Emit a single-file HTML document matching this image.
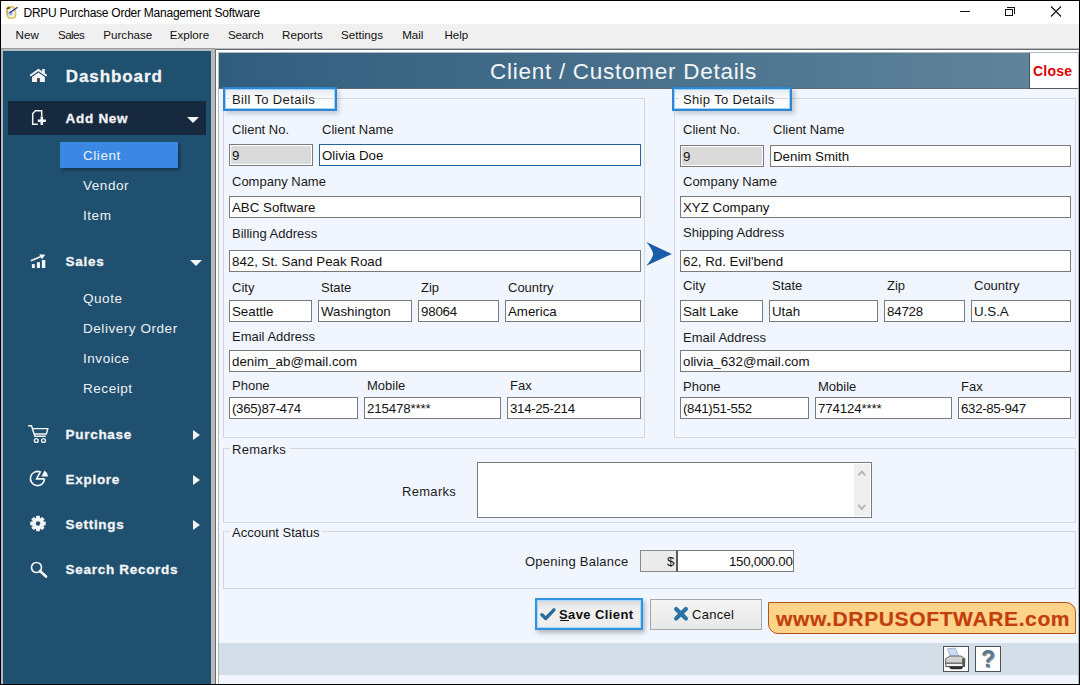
<!DOCTYPE html>
<html><head><meta charset="utf-8">
<style>
*{margin:0;padding:0;box-sizing:border-box}
html,body{width:1080px;height:685px;overflow:hidden}
body{background:#000;position:relative;font-family:"Liberation Sans",sans-serif;color:#000}
.a{position:absolute}
.t{position:absolute;white-space:nowrap;line-height:1}
#title{left:1px;top:1px;width:1078px;height:23px;background:#fff}
#menu{left:1px;top:24px;width:1078px;height:24px;background:#f0f0f0}
.mi{font-size:11.6px;color:#111;top:29px}
#side{left:3px;top:51px;width:208px;height:633px;background:#1f506f}
.sb{font-weight:bold;font-size:13.5px;letter-spacing:0.7px;color:#f2f4f6;-webkit-text-stroke:0.3px #f2f4f6}
.ss{font-size:13.5px;letter-spacing:0.55px;color:#eef1f4}
#main{left:219px;top:53px;width:859px;height:631px;background:#f1f6fe}
.lbl{font-size:13px;color:#1a1a1a}
.in{position:absolute;background:#fff;border:1px solid #7a7a7a;height:22px}
.iv{font-size:13.3px;color:#111;margin-top:-0.4px}
.grp{position:absolute;border:1px solid #d3d8de}
</style></head><body>
<!-- title bar -->
<div id="title" class="a"></div>
<svg class="a" style="left:3px;top:3px" width="17" height="17" viewBox="0 0 17 17">
 <path d="M3.8 5.2 L5.4 3.6 L7 4.6 L9 3.5 L10.8 4.3 L11.4 6.2 L12.6 9.2 L12.4 13.6 L10.8 15 L6.2 15.2 L4.6 13.4 L3.8 9.4 Z" fill="#fbf6e4" stroke="#dcc36a" stroke-width="1.7"/>
 <path d="M4.2 7 L4.8 11.5" stroke="#c9a55a" stroke-width="1.2"/>
 <path d="M4 5.6 L7.2 4.6" stroke="#2a2a2a" stroke-width="1.3"/>
 <circle cx="7.6" cy="10.4" r="2.2" fill="#a8baf0"/>
 <path d="M6.4 10 L14.6 4.3" stroke="#2836a0" stroke-width="1.4"/>
</svg>
<div class="t" style="left:23.5px;top:6.5px;font-size:12px;letter-spacing:-0.25px;color:#000">DRPU Purchase Order Management Software</div>
<!-- window controls -->
<div class="a" style="left:960px;top:11px;width:10px;height:1px;background:#111"></div>
<div class="a" style="left:1005px;top:9px;width:8px;height:7px;border:1px solid #111"></div>
<div class="a" style="left:1007px;top:7px;width:8px;height:7px;border-top:1px solid #111;border-right:1px solid #111"></div>
<svg class="a" style="left:1050px;top:6px" width="12" height="11" viewBox="0 0 12 11"><path d="M1 0.5 L11 10.5 M11 0.5 L1 10.5" stroke="#111" stroke-width="1.1"/></svg>
<!-- menu -->
<div id="menu" class="a"></div>
<div class="t mi" style="left:15.6px">New</div>
<div class="t mi" style="left:58px;letter-spacing:-0.55px">Sales</div>
<div class="t mi" style="left:103.3px">Purchase</div>
<div class="t mi" style="left:169.8px">Explore</div>
<div class="t mi" style="left:228px;letter-spacing:-0.2px">Search</div>
<div class="t mi" style="left:282.1px">Reports</div>
<div class="t mi" style="left:341.1px">Settings</div>
<div class="t mi" style="left:402.2px">Mail</div>
<div class="t mi" style="left:444.4px">Help</div>
<!-- frame strips -->
<div class="a" style="left:1px;top:48px;width:1078px;height:636px;background:#b4bcc2"></div>
<div class="a" style="left:211px;top:48px;width:4px;height:636px;background:#b8bbbd"></div>
<div class="a" style="left:1px;top:48px;width:214px;height:1px;background:#9a9a9a"></div>
<!-- sidebar -->
<div id="side" class="a"></div>

<!-- sidebar content -->
<svg class="a" style="left:28px;top:66px" width="22" height="18" viewBox="0 0 22 18">
 <path d="M1.6 10.2 L10.4 3.8 L19.2 10.2" fill="none" stroke="#1f506f" stroke-width="3.4"/>
 <rect x="14.2" y="3" width="2.6" height="5" fill="#f2f4f6"/>
 <path d="M2.1 9.8 L10.4 4 L18.7 9.8" fill="none" stroke="#f2f4f6" stroke-width="1.9"/>
 <path d="M4 11 L10.4 6.5 L16.9 11 L16.9 16 L4 16 Z" fill="#f2f4f6"/>
 <rect x="9.1" y="12.1" width="2.7" height="3.9" fill="#2e3c48"/>
</svg>
<div class="t sb" style="left:65.8px;top:68px;font-size:17px;letter-spacing:0.9px">Dashboard</div>
<div class="a" style="left:8px;top:101px;width:198px;height:34px;background:#17293f"></div>
<svg class="a" style="left:30px;top:108px" width="18" height="18" viewBox="0 0 18 18">
 <path d="M8 16.3 L2.7 16.3 L2.7 5.5 L5.5 2.7 L11.7 2.7 L11.7 8.5" fill="none" stroke="#f2f4f6" stroke-width="1.5"/>
 <path d="M11.8 8.3 L11.8 17.2 M7.4 12.7 L16.2 12.7" stroke="#17293f" stroke-width="5"/>
 <path d="M11.8 8.6 L11.8 16.9 M7.8 12.7 L15.9 12.7" stroke="#f2f4f6" stroke-width="2.6"/>
</svg>
<div class="t sb" style="left:65.6px;top:112px">Add New</div>
<svg class="a" style="left:187px;top:117px" width="12" height="6" viewBox="0 0 12 6"><path d="M0 0 L12 0 L6 6 Z" fill="#f2f4f6"/></svg>
<div class="a" style="left:62px;top:144px;width:118px;height:26px;background:rgba(0,0,0,0.35);filter:blur(1.5px)"></div>
<div class="a" style="left:60px;top:142px;width:118px;height:26px;background:#3a88e4"></div>
<div class="t ss" style="left:83px;top:149px">Client</div>
<div class="t ss" style="left:83px;top:179px">Vendor</div>
<div class="t ss" style="left:83px;top:209px">Item</div>
<svg class="a" style="left:28px;top:252px" width="20" height="18" viewBox="0 0 20 18">
 <rect x="3.9" y="12.1" width="2.9" height="3.9" fill="#f2f4f6"/>
 <rect x="8.9" y="10.2" width="3.1" height="5.8" fill="#f2f4f6"/>
 <rect x="13.9" y="8" width="3.4" height="8" fill="#f2f4f6"/>
 <path d="M2.8 8.8 L13 4.5" stroke="#f2f4f6" stroke-width="1.7"/>
 <path d="M11.2 2.2 L17.3 2.8 L14 7.3 Z" fill="#f2f4f6"/>
</svg>
<div class="t sb" style="left:65.6px;top:254.8px">Sales</div>
<svg class="a" style="left:190px;top:260px" width="12" height="6" viewBox="0 0 12 6"><path d="M0 0 L12 0 L6 6 Z" fill="#f2f4f6"/></svg>
<div class="t ss" style="left:83px;top:292px">Quote</div>
<div class="t ss" style="left:83px;top:322px">Delivery Order</div>
<div class="t ss" style="left:83px;top:352px">Invoice</div>
<div class="t ss" style="left:83px;top:382px">Receipt</div>
<svg class="a" style="left:24px;top:422px" width="26" height="22" viewBox="0 0 26 22">
 <path d="M4.1 3.7 L7.5 3.7 L10.9 14.3 L21.8 14.3" fill="none" stroke="#f2f4f6" stroke-width="1.5"/>
 <path d="M8.4 6.6 L23.8 6.6 L22.4 12 L10.2 12" fill="none" stroke="#f2f4f6" stroke-width="1.4"/>
 <circle cx="12.3" cy="18.5" r="1.9" fill="none" stroke="#f2f4f6" stroke-width="1.4"/>
 <circle cx="19.5" cy="18.5" r="1.9" fill="none" stroke="#f2f4f6" stroke-width="1.4"/>
</svg>
<div class="t sb" style="left:65.6px;top:427.5px">Purchase</div>
<svg class="a" style="left:193px;top:430px" width="7" height="10" viewBox="0 0 7 10"><path d="M0 0 L7 5 L0 10 Z" fill="#f2f4f6"/></svg>
<svg class="a" style="left:26px;top:466px" width="24" height="22" viewBox="0 0 24 22">
 <path d="M18.6 12.9 L10.6 12.9 L14.3 6 A7.1 7.1 0 1 0 18.6 12.9" fill="none" stroke="#f2f4f6" stroke-width="1.6" stroke-linejoin="miter"/>
 <path d="M15.3 10.4 L18.6 4.4 Q21.6 6.5 22.2 10.4 Z" fill="#f2f4f6"/>
</svg>
<div class="t sb" style="left:65.6px;top:473px">Explore</div>
<svg class="a" style="left:193px;top:475px" width="7" height="10" viewBox="0 0 7 10"><path d="M0 0 L7 5 L0 10 Z" fill="#f2f4f6"/></svg>
<svg class="a" style="left:30px;top:515px" width="16" height="17" viewBox="-8 -8.5 16 17">
 <g fill="#f2f4f6"><circle r="5.9"/>
 <rect x="-1.9" y="-7.7" width="3.8" height="15.4" rx="0.6"/>
 <rect x="-1.9" y="-7.7" width="3.8" height="15.4" rx="0.6" transform="rotate(45)"/>
 <rect x="-1.9" y="-7.7" width="3.8" height="15.4" rx="0.6" transform="rotate(90)"/>
 <rect x="-1.9" y="-7.7" width="3.8" height="15.4" rx="0.6" transform="rotate(135)"/></g>
 <circle r="2.2" fill="#1f506f"/>
</svg>
<div class="t sb" style="left:65.6px;top:518px">Settings</div>
<svg class="a" style="left:193px;top:520px" width="7" height="10" viewBox="0 0 7 10"><path d="M0 0 L7 5 L0 10 Z" fill="#f2f4f6"/></svg>
<svg class="a" style="left:30px;top:561px" width="18" height="17" viewBox="0 0 18 17">
 <circle cx="6.5" cy="6.5" r="5" fill="none" stroke="#f2f4f6" stroke-width="1.7"/>
 <path d="M10 10 L16 15.5" stroke="#f2f4f6" stroke-width="2.6" stroke-linecap="round"/>
</svg>
<div class="t sb" style="left:65.6px;top:563px">Search Records</div>
<!-- main frame -->
<div class="a" style="left:215px;top:49px;width:864px;height:635px;background:#6a6a6a"></div>
<div class="a" style="left:216px;top:50px;width:863px;height:634px;background:#fff"></div>
<div class="a" style="left:218px;top:52px;width:861px;height:632px;background:#b0b8c0"></div>
<div id="main" class="a"></div>

<!-- header -->
<div class="a" style="left:219px;top:53px;width:810px;height:35px;background:linear-gradient(to right,#315d7d,#5f839a)"></div>
<div class="t" style="left:490px;top:61px;font-size:22.5px;letter-spacing:0.73px;color:#f3f7fa">Client / Customer Details</div>
<div class="a" style="left:1029px;top:53px;width:49px;height:36px;background:#fff;border-left:1px solid #4a5560;border-bottom:1px solid #5a5a5a"></div>
<div class="t" style="left:1033px;top:64.3px;font-size:14px;font-weight:bold;letter-spacing:0.2px;color:#dd0000">Close</div>
<div class="a" style="left:219px;top:88px;width:810px;height:1px;background:#5a6a78"></div>

<!-- groups -->
<div class="grp" style="left:223px;top:98px;width:422px;height:340px"></div>
<div class="grp" style="left:674px;top:98px;width:402px;height:340px"></div>
<div class="grp" style="left:223px;top:448px;width:853px;height:75px"></div>
<div class="grp" style="left:223px;top:531px;width:853px;height:58px"></div>

<!-- Bill To label box -->
<div class="a" style="left:226px;top:90px;width:113px;height:24px;background:rgba(0,0,0,0.18);filter:blur(2px)"></div>
<div class="a" style="left:223px;top:87px;width:114px;height:24px;border:2px solid #2f86d2;background:linear-gradient(#e6e9ee,#fafbfd 45%,#fdfeff)"></div>
<div class="a" style="left:225px;top:89px;width:110px;height:20px;border:1px solid #9ad4fb"></div>
<div class="a" style="left:225px;top:98px;width:5px;height:1px;background:#d3d8de"></div>
<div class="a" style="left:313px;top:98px;width:22px;height:1px;background:#d3d8de"></div>
<div class="t lbl" style="left:232px;top:93px;letter-spacing:0.35px">Bill To Details</div>

<div class="a" style="left:675px;top:90px;width:120px;height:24px;background:rgba(0,0,0,0.18);filter:blur(2px)"></div>
<div class="a" style="left:672px;top:87px;width:120px;height:24px;border:2px solid #2f86d2;background:linear-gradient(#e6e9ee,#fafbfd 45%,#fdfeff)"></div>
<div class="a" style="left:674px;top:89px;width:116px;height:20px;border:1px solid #9ad4fb"></div>
<div class="a" style="left:674px;top:98px;width:5px;height:1px;background:#d3d8de"></div>
<div class="a" style="left:770px;top:98px;width:20px;height:1px;background:#d3d8de"></div>
<div class="t lbl" style="left:683px;top:93px;letter-spacing:0.35px">Ship To Details</div>

<!-- left group fields -->
<div class="t lbl" style="left:232px;top:123px">Client No.</div>
<div class="t lbl" style="left:322px;top:123px">Client Name</div>
<div class="in" style="left:229px;top:144px;width:84px;background:#dadada;box-shadow:inset 0 0 0 1px #fff"></div>
<div class="t iv" style="left:232px;top:149px">9</div>
<div class="in" style="left:319px;top:144px;width:322px;border-color:#26609a"></div>
<div class="t iv" style="left:322px;top:149px">Olivia Doe</div>
<div class="t lbl" style="left:232px;top:175px">Company Name</div>
<div class="in" style="left:229px;top:196px;width:412px"></div>
<div class="t iv" style="left:232px;top:201px">ABC Software</div>
<div class="t lbl" style="left:232px;top:227px">Billing Address</div>
<div class="in" style="left:229px;top:250px;width:412px"></div>
<div class="t iv" style="left:232px;top:255px">842, St. Sand Peak Road</div>
<div class="t lbl" style="left:232px;top:281px">City</div>
<div class="t lbl" style="left:321px;top:281px">State</div>
<div class="t lbl" style="left:421px;top:281px">Zip</div>
<div class="t lbl" style="left:508px;top:281px">Country</div>
<div class="in" style="left:229px;top:300px;width:83px"></div>
<div class="in" style="left:318px;top:300px;width:94px"></div>
<div class="in" style="left:418px;top:300px;width:81px"></div>
<div class="in" style="left:505px;top:300px;width:136px"></div>
<div class="t iv" style="left:232px;top:305px">Seattle</div>
<div class="t iv" style="left:321px;top:305px">Washington</div>
<div class="t iv" style="left:421px;top:305px;letter-spacing:-0.2px">98064</div>
<div class="t iv" style="left:508px;top:305px">America</div>
<div class="t lbl" style="left:232px;top:330px">Email Address</div>
<div class="in" style="left:229px;top:350px;width:412px"></div>
<div class="t iv" style="left:232px;top:355px">denim_ab@mail.com</div>
<div class="t lbl" style="left:232px;top:379px">Phone</div>
<div class="t lbl" style="left:367px;top:379px">Mobile</div>
<div class="t lbl" style="left:510px;top:379px">Fax</div>
<div class="in" style="left:229px;top:397px;width:129px"></div>
<div class="in" style="left:364px;top:397px;width:137px"></div>
<div class="in" style="left:507px;top:397px;width:134px"></div>
<div class="t iv" style="left:232px;top:402px;letter-spacing:-0.33px">(365)87-474</div>
<div class="t iv" style="left:367px;top:402px;letter-spacing:-0.16px">215478****</div>
<div class="t iv" style="left:510px;top:402px;letter-spacing:-0.33px">314-25-214</div>

<!-- arrow -->
<svg class="a" style="left:645px;top:241px" width="28" height="26" viewBox="0 0 28 26">
 <path d="M1.3 1 L26.8 13.1 L1.3 24.7 Q7 18.5 8.2 13.1 Q7 7.5 1.3 1 Z" fill="#1a5ca8"/>
</svg>

<!-- right group fields -->
<div class="t lbl" style="left:683px;top:123px">Client No.</div>
<div class="t lbl" style="left:773px;top:123px">Client Name</div>
<div class="in" style="left:680px;top:145px;width:84px;background:#dadada;box-shadow:inset 0 0 0 1px #fff"></div>
<div class="t iv" style="left:683px;top:150px">9</div>
<div class="in" style="left:770px;top:145px;width:301px"></div>
<div class="t iv" style="left:773px;top:150px">Denim Smith</div>
<div class="t lbl" style="left:683px;top:175px">Company Name</div>
<div class="in" style="left:680px;top:196px;width:391px"></div>
<div class="t iv" style="left:683px;top:201px">XYZ Company</div>
<div class="t lbl" style="left:683px;top:226px">Shipping Address</div>
<div class="in" style="left:680px;top:250px;width:391px"></div>
<div class="t iv" style="left:683px;top:255px">62, Rd. Evil'bend</div>
<div class="t lbl" style="left:683px;top:279px">City</div>
<div class="t lbl" style="left:772px;top:279px">State</div>
<div class="t lbl" style="left:887px;top:279px">Zip</div>
<div class="t lbl" style="left:974px;top:279px">Country</div>
<div class="in" style="left:680px;top:300px;width:83px"></div>
<div class="in" style="left:769px;top:300px;width:109px"></div>
<div class="in" style="left:884px;top:300px;width:81px"></div>
<div class="in" style="left:971px;top:300px;width:100px"></div>
<div class="t iv" style="left:683px;top:305px">Salt Lake</div>
<div class="t iv" style="left:772px;top:305px">Utah</div>
<div class="t iv" style="left:887px;top:305px;letter-spacing:-0.2px">84728</div>
<div class="t iv" style="left:974px;top:305px">U.S.A</div>
<div class="t lbl" style="left:683px;top:331px">Email Address</div>
<div class="in" style="left:680px;top:350px;width:391px"></div>
<div class="t iv" style="left:683px;top:355px">olivia_632@mail.com</div>
<div class="t lbl" style="left:683px;top:380px">Phone</div>
<div class="t lbl" style="left:818px;top:380px">Mobile</div>
<div class="t lbl" style="left:961px;top:380px">Fax</div>
<div class="in" style="left:680px;top:397px;width:129px"></div>
<div class="in" style="left:815px;top:397px;width:137px"></div>
<div class="in" style="left:958px;top:397px;width:113px"></div>
<div class="t iv" style="left:683px;top:402px;letter-spacing:-0.33px">(841)51-552</div>
<div class="t iv" style="left:818px;top:402px;letter-spacing:-0.16px">774124****</div>
<div class="t iv" style="left:961px;top:402px;letter-spacing:-0.33px">632-85-947</div>

<!-- remarks -->
<div class="t lbl" style="left:230px;top:443px;background:#f1f6fe;padding:0 3px 0 2px;letter-spacing:0.3px">Remarks</div>
<div class="t lbl" style="left:402px;top:485px;letter-spacing:0.3px">Remarks</div>
<div class="a" style="left:477px;top:462px;width:395px;height:56px;background:#fff;border:1px solid #7a7a7a"></div>
<div class="a" style="left:854px;top:464px;width:16px;height:52px;background:#efefef"></div>
<svg class="a" style="left:857px;top:469px" width="10" height="8" viewBox="0 0 10 8"><path d="M1.3 6.5 L4.8 2.3 L8.3 6.5" fill="none" stroke="#b4b4b4" stroke-width="1.8"/></svg>
<svg class="a" style="left:857px;top:503px" width="10" height="8" viewBox="0 0 10 8"><path d="M1.3 1.8 L4.8 6 L8.3 1.8" fill="none" stroke="#b4b4b4" stroke-width="1.8"/></svg>

<!-- account status -->
<div class="t lbl" style="left:230px;top:526px;background:#f1f6fe;padding:0 3px 0 2px">Account Status</div>
<div class="t lbl" style="left:525px;top:555px;letter-spacing:0.25px">Opening Balance</div>
<div class="a" style="left:640px;top:550px;width:38px;height:22px;background:#ebebeb;border:1px solid #8a8a8a;border-right:none"></div>
<div class="t iv" style="left:667px;top:555px">$</div>
<div class="a" style="left:676px;top:550px;width:118px;height:22px;background:#fff;border:1px solid #7a7a7a;border-left:2px solid #5a5a5a"></div>
<div class="t iv" style="left:729px;top:555px;letter-spacing:-0.3px">150,000.00</div>

<!-- buttons -->
<div class="a" style="left:537px;top:601px;width:108px;height:32px;background:rgba(0,0,0,0.25);filter:blur(2px)"></div>
<div class="a" style="left:535px;top:598px;width:108px;height:32px;border:2px solid #3393e0;background:linear-gradient(#d9d9d9,#f0f0f0 35%,#ededed)"></div><div class="a" style="left:537px;top:600px;width:104px;height:28px;border:1px solid #a6dafc"></div>
<svg class="a" style="left:539px;top:606px" width="19" height="16" viewBox="0 0 19 16">
 <path d="M2.9 8.8 L6.7 12.5 L15 3.9" fill="none" stroke="#2a6e98" stroke-width="3.4" stroke-linecap="round" stroke-linejoin="round"/>
</svg>
<div class="t" style="left:559px;top:608px;font-size:13px;font-weight:bold;letter-spacing:0.4px;color:#111">Save Client</div>
<div class="a" style="left:559.5px;top:620px;width:9px;height:1.3px;background:#111"></div>
<div class="a" style="left:650px;top:599px;width:112px;height:31px;border:1px solid #a8a8a8;background:linear-gradient(#f4f4f4,#e8e8e8)"></div>
<svg class="a" style="left:672px;top:606px" width="17" height="16" viewBox="0 0 17 16">
 <path d="M4.1 3.1 L13.9 12.6 M13.9 3.1 L4.1 12.6" stroke="#2a72a2" stroke-width="4.2" stroke-linecap="round"/>
</svg>
<div class="t" style="left:692px;top:608px;font-size:13px;letter-spacing:0.3px;color:#111">Cancel</div>

<!-- banner -->
<div class="a" style="left:768px;top:602px;width:308px;height:32px;background:#fdd48a;border:1.5px solid #b4521c;border-radius:0 10px 0 10px"></div>
<div class="t" style="left:776px;top:607.5px;font-size:21px;font-weight:bold;letter-spacing:0.63px;color:#c23e0c;-webkit-text-stroke:0.2px #c23e0c">www.DRPUSOFTWARE.com</div>

<!-- status bar -->
<div class="a" style="left:219px;top:643px;width:859px;height:32px;background:#d3dee8"></div>
<div class="a" style="left:943px;top:646px;width:26px;height:26px;background:#fff;border:1.5px solid #4e545a"></div>
<svg class="a" style="left:944px;top:647px" width="24" height="24" viewBox="0 0 24 24">
 <path d="M3.6 1.8 L11.5 1.2 L14.6 9.6 L6.6 10.2 Z" fill="#c8dcf6" stroke="#94a8c0" stroke-width="0.8"/>
 <path d="M1.6 11.6 L6 9 L16.8 9 L20.8 11.4 L20.8 16.4 L1.6 16.4 Z" fill="#d2d2d0" stroke="#5a5a5a" stroke-width="0.9"/>
 <path d="M1.8 16.2 L20.6 16.2 L20.6 19.6 L1.8 19.6 Z" fill="#f2f2f2" stroke="#3a3a3a" stroke-width="0.9"/>
 <path d="M18 11.5 L20.8 11.4 L20.8 19.6 L18.5 19.8 Z" fill="#505a50"/>
 <path d="M4.5 19.6 L19.5 19.6 L17.5 22.2 L7 22.2 Z" fill="#2e2e2e"/>
</svg>
<div class="a" style="left:975px;top:646px;width:26px;height:26px;background:#fff;border:1.5px solid #4e545a"></div>
<div class="t" style="left:981px;top:648px;font-size:23px;font-weight:bold;color:#5f7688;text-shadow:1px 1px 0 #8fa0ae">?</div>
</body></html>
